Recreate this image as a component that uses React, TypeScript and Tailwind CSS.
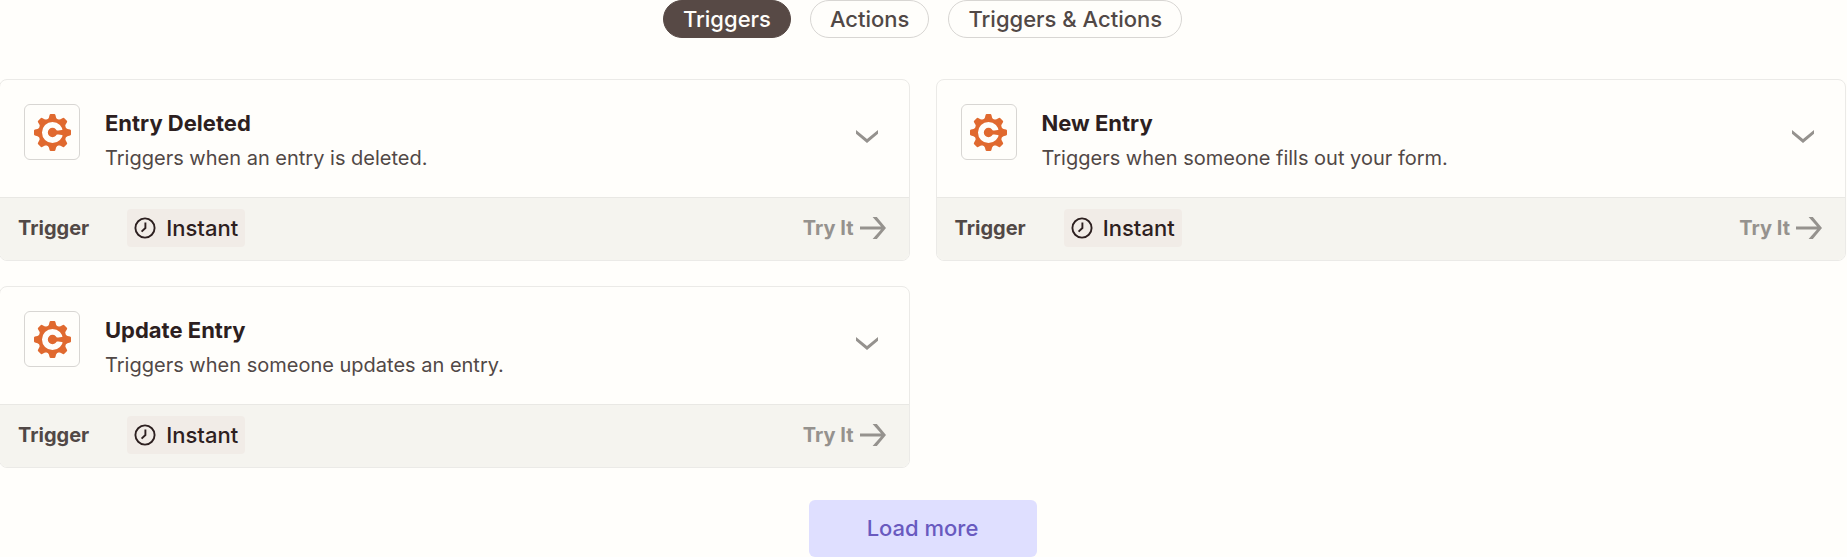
import { useState } from "react";

type Entry = { title: string; description: string };

const entries: Entry[] = [
  { title: "Entry Deleted", description: "Triggers when an entry is deleted." },
  { title: "New Entry", description: "Triggers when someone fills out your form." },
  { title: "Update Entry", description: "Triggers when someone updates an entry." },
];

const filters = ["Triggers", "Actions", "Triggers & Actions"];

const teeth = [0, 45, 90, 135, 180, 225, 270, 315];

function GearLogo() {
  return (
    <svg viewBox="-20 -20 40 40" className="size-[39px]" aria-hidden="true">
      <g fill="#e0692f">
        <circle r="14.6" />
        {teeth.map((angle) => (
          <path
            key={angle}
            d="M-5 -13.4 Q-3.4 -15 -3 -18 Q-2.8 -19 -1.8 -19 H1.8 Q2.8 -19 3 -18 Q3.4 -15 5 -13.4 Z"
            transform={`rotate(${angle})`}
          />
        ))}
      </g>
      <circle r="7.8" fill="none" stroke="#fffefb" strokeWidth="6" />
      <path d="M0 -2 H6 L13 -3 V3 L6 2 H0 Z" fill="#e0692f" />
    </svg>
  );
}

function ChevronIcon() {
  return (
    <svg viewBox="0 0 22 13" className="h-[13px] w-[22px]" aria-hidden="true">
      <path d="M0 0 L11 9 L22 0 V3.8 L11 13 L0 3.8 Z" fill="#95928e" />
    </svg>
  );
}

function ArrowIcon() {
  return (
    <svg viewBox="0 0 26 22" className="h-[22px] w-[26px]" aria-hidden="true">
      <path d="M0 9.6 H21 L12.6 0 H16.8 L26 11 L16.8 22 H12.6 L21 12.4 H0 Z" fill="#95928e" />
    </svg>
  );
}

function ClockIcon() {
  return (
    <svg viewBox="0 0 22 22" className="size-[22px]" fill="none" stroke="#2d2020" strokeWidth="1.9" aria-hidden="true">
      <circle cx="11" cy="11" r="9.6" />
      <path d="M11.4 5.6 V11 L7.6 14.6" />
    </svg>
  );
}

function EntryCard({ title, description }: Entry) {
  return (
    <article className="overflow-hidden rounded-lg border border-[#ebeae7]">
      <div className="flex items-start pt-6 pr-[31px] pb-[21px] pl-6">
        <div className="flex size-14 shrink-0 items-center justify-center rounded-md border border-[#d8d6d3]">
          <GearLogo />
        </div>
        <div className="ml-[25px] min-w-0 flex-1 pt-0.5">
          <h2 className="text-[22px] leading-[34px] font-bold text-[#2d1f1f]">{title}</h2>
          <p className="text-[20px] leading-9 text-[#514846]">{description}</p>
        </div>
        <button type="button" aria-label={`Show details of ${title}`} className="mt-[26px]">
          <ChevronIcon />
        </button>
      </div>
      <div className="flex h-[63px] items-center border-t border-[#e9e8e4] bg-[#f5f4ef] pr-[23px] pb-0.5 pl-[18px]">
        <span className="text-[20px] font-bold text-[#514846]">Trigger</span>
        <span className="ml-[38px] flex h-[38px] items-center gap-2.5 rounded-sm bg-[#f1ece7] px-[7px] text-[22px] font-medium text-[#2d2020]">
          <ClockIcon />
          Instant
        </span>
        <a href="#try" className="ml-auto flex items-center gap-1.5 text-[20px] font-bold text-[#95928e]">
          Try It
          <ArrowIcon />
        </a>
      </div>
    </article>
  );
}

export default function App() {
  const [active, setActive] = useState("Triggers");

  return (
    <main className="-ml-px bg-[#fffefb] pr-px font-['Inter',sans-serif]">
      <nav className="flex justify-center gap-[19px]" aria-label="Filter">
        {filters.map((filter) => (
          <button
            key={filter}
            type="button"
            aria-pressed={filter === active}
            onClick={() => setActive(filter)}
            className={
              filter === active
                ? "h-[38px] rounded-full border border-[#574945] bg-[#574945] px-[19px] text-[22px] font-medium text-[#fffefb]"
                : "h-[38px] rounded-full border border-[#d8d6d3] px-[19px] text-[22px] font-medium text-[#514846]"
            }
          >
            {filter}
          </button>
        ))}
      </nav>
      <section className="mt-[41px] grid grid-cols-2 gap-x-[26px] gap-y-[25px]">
        {entries.map((entry) => (
          <EntryCard key={entry.title} {...entry} />
        ))}
      </section>
      <div className="mt-8 flex justify-center">
        <button type="button" className="h-[57px] w-[228px] rounded-md bg-[#dfdfff] text-[22px] font-medium text-[#695abf]">
          Load more
        </button>
      </div>
    </main>
  );
}
